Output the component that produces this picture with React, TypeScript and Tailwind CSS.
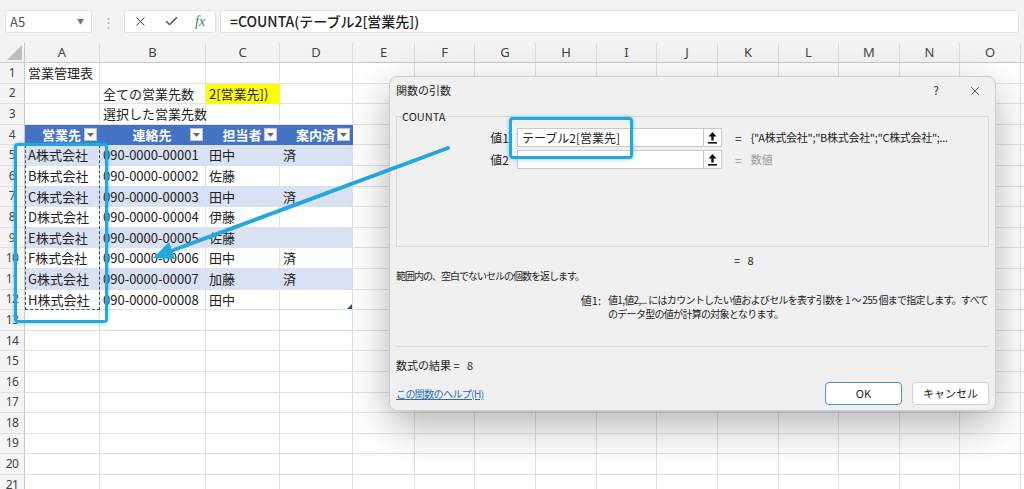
import React from 'react'
import { X, Check } from 'lucide-react'

const colW = [
  'w-[75px]', 'w-[106px]', 'w-[74px]', 'w-[73px]', 'w-[62px]', 'w-[60px]', 'w-[61px]', 'w-[61px]',
  'w-[60px]', 'w-[61px]', 'w-[61px]', 'w-[60px]', 'w-[61px]', 'w-[60px]', 'w-[61px]', 'w-[60px]',
]
const letters = 'ABCDEFGHIJKLMNO'.split('').concat([''])

const tableRows = [
  ['A株式会社', '090-0000-00001', '田中', '済'],
  ['B株式会社', '090-0000-00002', '佐藤', ''],
  ['C株式会社', '090-0000-00003', '田中', '済'],
  ['D株式会社', '090-0000-00004', '伊藤', ''],
  ['E株式会社', '090-0000-00005', '佐藤', ''],
  ['F株式会社', '090-0000-00006', '田中', '済'],
  ['G株式会社', '090-0000-00007', '加藤', '済'],
  ['H株式会社', '090-0000-00008', '田中', ''],
]
const headers = ['営業先', '連絡先', '担当者', '案内済']

const cellBase = 'shrink-0 h-full flex items-center px-[3px] text-[13px] text-[#222] whitespace-nowrap border-r border-b'

function FilterButton() {
  return (
    <span className="flex h-[13px] w-[13px] items-center justify-center border border-[#c5c5c5] bg-white">
      <svg width="7" height="4" viewBox="0 0 7 4"><path d="M0 0h7L3.5 4z" fill="#666" /></svg>
    </span>
  )
}

function Cell({ row, col }: { row: number; col: number }) {
  const w = colW[col]
  if (row === 4 && col < 4) {
    return (
      <div className={`${w} shrink-0 h-full grid grid-cols-[14px_1fr_14px] items-center bg-[#4472c4] border-b border-[#4472c4] pr-[2px] text-[13px] font-bold text-white`}>
        <span />
        <span className="text-center">{headers[col]}</span>
        <FilterButton />
      </div>
    )
  }
  if (row >= 5 && row <= 12 && col < 4) {
    const band = (row - 5) % 2 === 0
    const text = tableRows[row - 5][col]
    return (
      <div className={band ? `${w} ${cellBase} bg-[#d9e1f2] border-[#d9e1f2]` : `${w} ${cellBase} bg-white border-r-[#e1e1e1] border-b-[#d9e1f2]`}>
        {text}
      </div>
    )
  }
  let text = ''
  let cls = `${w} ${cellBase} border-[#e1e1e1]`
  if (row === 1 && col === 0) text = '営業管理表'
  if (row === 2 && col === 1) text = '全ての営業先数'
  if (row === 2 && col === 2) {
    text = '2[営業先])'
    cls = `${w} ${cellBase} border-[#ffff00] bg-[#ffff00]`
  }
  if (row === 3 && col === 1) text = '選択した営業先数'
  return <div className={cls}>{text}</div>
}

function CollapseIcon() {
  return (
    <svg width="9" height="12" viewBox="0 0 9 12">
      <path d="M4.5 0L8.5 4.5H5.7V8.5H3.3V4.5H0.5Z" fill="#111" />
      <rect x="0" y="10" width="9" height="1.6" fill="#111" />
    </svg>
  )
}

function ArgRow({ label, value, hint }: { label: string; value: string; hint: React.ReactNode }) {
  return (
    <div className="flex h-[19px] items-center">
      <span className="w-[107px] shrink-0 text-right text-[12px]">{label}</span>
      <div className="ml-[8px] flex h-[19px] w-[187px] shrink-0 items-center border border-[#c9c9c9] bg-white px-[4px] text-[12px]">{value}</div>
      <div className="flex h-[19px] w-[18px] shrink-0 items-center justify-center border border-l-0 border-[#c9c9c9] bg-white">
        <CollapseIcon />
      </div>
      {hint}
    </div>
  )
}

function FunctionDialog() {
  return (
    <div className="absolute left-[389px] top-[76px] h-[335px] w-[607px] rounded-[8px] border border-[#cdcdcd] bg-[#f0f0f0] text-[#1e1e1e] shadow-[0_14px_40px_rgba(0,0,0,0.3)]">
      <div className="flex h-[27px] items-center pl-[6px] pr-[13px] text-[11px]">
        <span className="flex-1">関数の引数</span>
        <span className="w-[20px] text-center text-[11px]">?</span>
        <X className="ml-[22px] h-[14px] w-[14px] text-[#333]" strokeWidth={1.3} />
      </div>
      <div className="px-[6px]">
        <fieldset className="mt-[5px] h-[138px] border border-[#d9d9d9] px-[5px] pt-[5px]">
          <legend className="text-[11px] leading-[14px]">COUNTA</legend>
          <ArgRow
            label="値1"
            value="テーブル2[営業先]"
            hint={
              <>
                <span className="ml-[13px] text-[12px]">=</span>
                <span className="ml-[9px] whitespace-nowrap text-[11px] tracking-[-0.3px]">{'{"A株式会社";"B株式会社";"C株式会社";...'}</span>
              </>
            }
          />
          <div className="mt-[3px]">
            <ArgRow
              label="値2"
              value=""
              hint={
                <>
                  <span className="ml-[13px] text-[12px] text-[#9a9a9a]">=</span>
                  <span className="ml-[9px] text-[11px] text-[#9a9a9a]">数値</span>
                </>
              }
            />
          </div>
        </fieldset>
        <div className="mt-[6px] pl-[338px] text-[11px] leading-[14px]">=&nbsp;&nbsp;&nbsp;8</div>
        <div className="mt-[2px] text-[10px] leading-[14px] tracking-[-1px]">範囲内の、空白でないセルの個数を返します。</div>
        <div className="mt-[10px] flex leading-[14px]">
          <span className="w-[205px] shrink-0 text-right text-[11px]">値1:</span>
          <span className="ml-[7px] whitespace-nowrap text-[10px] tracking-[-0.7px]">
            値1,値2,... にはカウントしたい値およびセルを表す引数を 1 ～ 255 個まで指定します。すべて
            <br />
            のデータ型の値が計算の対象となります。
          </span>
        </div>
        <div className="mt-[25px] h-px bg-[#dcdcdc]" />
        <div className="mt-[11px] text-[11px] leading-[14px]">数式の結果 =&nbsp;&nbsp;&nbsp;8</div>
        <div className="mt-[10px] flex h-[23px] items-center">
          <span className="flex-1 text-[10px] tracking-[-0.6px] text-[#2f6fb0] underline">この関数のヘルプ(H)</span>
          <div className="flex h-[23px] w-[77px] items-center justify-center rounded-[4px] border border-[#5a8fb8] bg-white text-[11px]">OK</div>
          <div className="ml-[10px] flex h-[23px] w-[77px] items-center justify-center rounded-[4px] border border-[#d3d3d3] bg-white text-[11px]">キャンセル</div>
        </div>
      </div>
    </div>
  )
}

export default function App() {
  const rows = Array.from({ length: 21 }, (_, i) => i + 1)
  return (
    <div className="relative h-[489px] w-[1024px] overflow-hidden bg-white font-['Noto_Sans_CJK_JP','Noto_Sans',sans-serif]">
      {/* formula bar */}
      <div className="flex h-[43px] items-center bg-[#f3f3f3] px-[5px]">
        <div className="flex h-[23px] w-[87px] items-center justify-between rounded-[3px] border border-[#e2e2e2] bg-white pl-[4px] pr-[7px] text-[13px] text-[#555]">
          <span>A5</span>
          <span className="text-[7px] text-[#777]">▼</span>
        </div>
        <span className="ml-[10px] text-[13px] text-[#b5b5b5]">⋮</span>
        <div className="ml-[9px] flex h-[23px] w-[92px] items-center rounded-[3px] border border-[#e2e2e2] bg-white pl-[8px] text-[#444]">
          <X className="h-[15px] w-[15px]" strokeWidth={1.6} />
          <Check className="ml-[16px] h-[15px] w-[15px]" strokeWidth={2.2} />
          <span className="ml-[16px] font-['Liberation_Serif',serif] text-[14px] italic text-[#2e8a57]">fx</span>
        </div>
        <div className="ml-[4px] flex h-[23px] flex-1 items-center rounded-[3px] border border-[#e2e2e2] bg-white pl-[9px] text-[14px] font-medium text-[#222]">
          =COUNTA(テーブル2[営業先])
        </div>
      </div>

      {/* column headers */}
      <div className="flex h-[20px] bg-[#f3f3f3]">
        <div className="flex h-full w-[25px] shrink-0 items-end justify-end border-r border-b border-[#c8c8c8] p-[2px]">
          <svg width="15" height="15" viewBox="0 0 15 15"><path d="M15 0V15H0z" fill="#bdbdbd" /></svg>
        </div>
        {letters.map((l, i) => (
          <div key={i} className={`${colW[i]} flex h-full shrink-0 items-center justify-center border-r border-b border-r-[#dcdcdc] border-b-[#c8c8c8] font-['Noto_Sans',sans-serif] text-[13px] text-[#444]`}>
            {l}
          </div>
        ))}
      </div>

      {/* rows */}
      {rows.map((r) => (
        <div key={r} className="flex h-[20.6px]">
          <div className="flex h-full w-[25px] shrink-0 items-center justify-center border-r border-b border-r-[#c8c8c8] border-b-[#e1e1e1] bg-[#f5f5f5] font-['Noto_Sans',sans-serif] text-[12px] tracking-[-0.5px] text-[#444]">
            {r}
          </div>
          {letters.map((_, c) => (
            <Cell key={c} row={r} col={c} />
          ))}
        </div>
      ))}

      {/* copy marquee */}
      <div className="absolute left-[25px] top-[145px] h-[165px] w-[75px] border border-dashed border-[#355e4b]" />

      <FunctionDialog />

      {/* annotations */}
      <div className="absolute left-[14px] top-[143px] h-[180px] w-[94px] rounded-[4px] border-[3px] border-[#22a7de] shadow-[0_0_4px_rgba(34,167,222,0.6)]" />
      <div className="absolute left-[509px] top-[117px] h-[42px] w-[124px] rounded-[4px] border-[3px] border-[#22a7de] shadow-[0_0_4px_rgba(34,167,222,0.6)]" />
      <svg className="pointer-events-none absolute left-0 top-0" width="1024" height="489">
        <polygon points="352,304 352,309 347,309" fill="#2b4f82" />
        <line x1="448" y1="148" x2="171" y2="251" stroke="#22a7de" strokeWidth="4" strokeLinecap="round" />
        <polygon points="153,258 175,259 169,242" fill="#22a7de" />
      </svg>
    </div>
  )
}
